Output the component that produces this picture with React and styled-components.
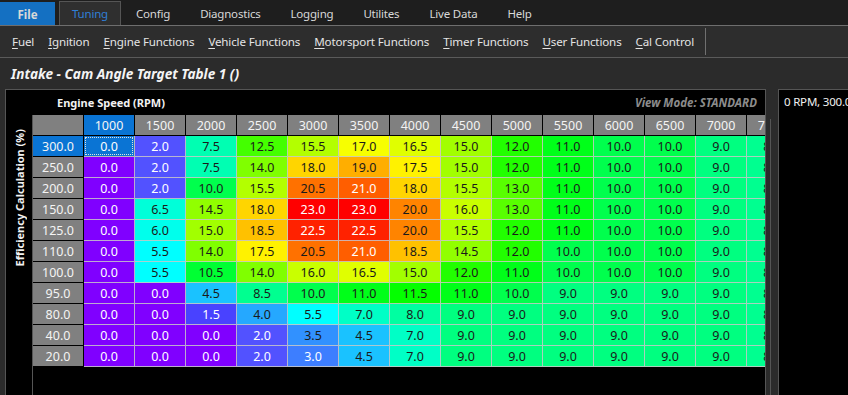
import React from 'react';
import styled, { createGlobalStyle } from 'styled-components';

const GlobalStyle = createGlobalStyle`
  html, body {
    margin: 0;
    padding: 0;
    background: #2b2b2b;
    overflow: hidden;
  }
  body {
    font-family: "Noto Sans", "Open Sans", sans-serif;
    color: #e6e6e6;
  }
`;

const Page = styled.div`
  display: flex;
  flex-direction: column;
  width: 848px;
  height: 395px;
  overflow: hidden;
  background: #2b2b2b;
`;

const MenuBar = styled.div`
  display: flex;
  align-items: flex-end;
  height: 25px;
  background: #1e1e1e;
  border-bottom: 1px solid #6e6e6e;
`;

const MenuTab = styled.div`
  display: flex;
  align-items: center;
  justify-content: center;
  height: 23px;
  padding: 0 ${props => props.pad || 14}px;
  font-size: 11.5px;
  letter-spacing: -0.2px;
  color: ${props => (props.active ? '#2f7fd6' : '#d8d8d8')};
  font-weight: ${props => (props.primary ? 700 : 400)};
  background: ${props => (props.primary ? '#1470c2' : props.active ? '#2f2f2f' : 'transparent')};
  border: 1px solid ${props => (props.active ? '#555' : 'transparent')};
  border-bottom: none;
  margin-right: ${props => (props.primary ? 4 : 0)}px;
  ${props => (props.primary ? 'width: 55px; padding: 0; box-sizing: border-box; letter-spacing: 0;' : '')}
`;

const Toolbar = styled.div`
  display: flex;
  align-items: center;
  height: 31px;
  padding-left: 5px;
  background: #2d2d2d;
  border-bottom: 1px solid #5a5a5a;
`;

const ToolItem = styled.div`
  padding: 0 7px;
  font-size: 11.6px;
  letter-spacing: -0.15px;
  color: #e4e4e4;
  white-space: nowrap;

  u {
    text-decoration-thickness: 1px;
    text-underline-offset: 2px;
  }
`;

const ToolSeparator = styled.div`
  width: 1px;
  height: 27px;
  margin-left: 4px;
  background: #707070;
`;

const TitleBar = styled.div`
  display: flex;
  align-items: center;
  height: 31px;
  padding-left: 11px;
  font-size: 13.6px;
  font-weight: 700;
  font-style: italic;
  color: #f4f4f4;
`;

const Workspace = styled.div`
  flex: 1;
  display: flex;
  min-height: 0;
  padding-left: 5px;
`;

const TablePanel = styled.div`
  display: flex;
  flex-direction: column;
  width: 759px;
  background: #000;
  border-top: 1px solid #555;
  border-left: 1px solid #555;
  border-right: 1px solid #555;
`;

const Splitter = styled.div`
  width: 12px;
  display: flex;
  justify-content: flex-start;
  padding-left: 4px;
  box-sizing: border-box;

  &::before {
    content: '';
    width: 1px;
    margin-top: 30px;
    background: #555;
  }
`;

const SidePanel = styled.div`
  flex: 1;
  background: #000;
  border-top: 1px solid #555;
  border-left: 1px solid #555;
  padding: 4px 0 0 5px;
  font-size: 11.5px;
  letter-spacing: -0.2px;
  color: #f0f0f0;
  white-space: nowrap;
  overflow: hidden;
`;

const PanelHeader = styled.div`
  display: flex;
  align-items: center;
  justify-content: space-between;
  height: 25px;
  padding: 0 8px 0 51px;
`;

const AxisTitle = styled.div`
  font-size: 11px;
  font-weight: 700;
  color: #f2f2f2;
`;

const ViewMode = styled.div`
  font-size: 11.5px;
  font-weight: 700;
  font-style: italic;
  color: #8c8c8c;
`;

const PanelBody = styled.div`
  flex: 1;
  display: flex;
  min-height: 0;
`;

const SideAxis = styled.div`
  width: 26px;
  display: flex;
  justify-content: center;
  padding-top: 14px;
  box-sizing: border-box;
`;

const SideAxisLabel = styled.div`
  writing-mode: vertical-rl;
  transform: rotate(180deg);
  font-size: 11px;
  font-weight: 700;
  color: #f2f2f2;
  white-space: nowrap;
  height: max-content;
`;

const Viewport = styled.div`
  flex: 1;
  overflow: hidden;
  border-left: 1px solid #555;
`;

const Grid = styled.div`
  display: grid;
  grid-template-columns: repeat(${props => props.cols}, 51px);
  grid-auto-rows: 21px;
  width: max-content;
  font-size: 12.5px;
`;

const Cell = styled.div`
  display: flex;
  align-items: center;
  justify-content: center;
  box-sizing: border-box;
  border-right: 1px solid ${props => props.line};
  border-bottom: 1px solid ${props => props.line};
  background: ${props => props.bg};
  color: ${props => props.fg};
  white-space: nowrap;
  overflow: hidden;
`;

const SelectedMark = styled.span`
  display: flex;
  align-items: center;
  justify-content: center;
  width: calc(100% - 2px);
  height: calc(100% - 2px);
  outline: 1px dotted #e0e0e0;
  outline-offset: -1px;
`;

const menu = ['Config', 'Diagnostics', 'Logging', 'Utilites', 'Live Data', 'Help'];
const tools = [
  ['F', 'uel'],
  ['I', 'gnition'],
  ['E', 'ngine Functions'],
  ['V', 'ehicle Functions'],
  ['M', 'otorsport Functions'],
  ['T', 'imer Functions'],
  ['U', 'ser Functions'],
  ['C', 'al Control'],
];

const rpm = ['1000', '1500', '2000', '2500', '3000', '3500', '4000', '4500', '5000', '5500', '6000', '6500', '7000', '7500'];

const rows = [
  ['300.0', [0, 2, 7.5, 12.5, 15.5, 17, 16.5, 15, 12, 11, 10, 10, 9, 8.5]],
  ['250.0', [0, 2, 7.5, 14, 18, 19, 17.5, 15, 12, 11, 10, 10, 9, 8.5]],
  ['200.0', [0, 2, 10, 15.5, 20.5, 21, 18, 15.5, 13, 11, 10, 10, 9, 8.5]],
  ['150.0', [0, 6.5, 14.5, 18, 23, 23, 20, 16, 13, 11, 10, 10, 9, 8.5]],
  ['125.0', [0, 6, 15, 18.5, 22.5, 22.5, 20, 15.5, 12, 11, 10, 10, 9, 8.5]],
  ['110.0', [0, 5.5, 14, 17.5, 20.5, 21, 18.5, 14.5, 12, 10, 10, 10, 9, 8.5]],
  ['100.0', [0, 5.5, 10.5, 14, 16, 16.5, 15, 12, 11, 10, 10, 10, 9, 8.5]],
  ['95.0', [0, 0, 4.5, 8.5, 10, 11, 11.5, 11, 10, 9, 9, 9, 9, 8.5]],
  ['80.0', [0, 0, 1.5, 4, 5.5, 7, 8, 9, 9, 9, 9, 9, 9, 8.5]],
  ['40.0', [0, 0, 0, 2, 3.5, 4.5, 7, 9, 9, 9, 9, 9, 9, 8.5]],
  ['20.0', [0, 0, 0, 2, 3, 4.5, 7, 9, 9, 9, 9, 9, 9, 8.5]],
];

// value -> [hue, lightness] stops, read off the table's colour map
const stops = [
  [0, 270, 50], [1.5, 242, 63], [2, 240, 66], [3, 220, 62], [4.5, 196, 55],
  [5.5, 180, 50], [7.5, 162, 50], [9, 150, 50], [10, 138, 50], [11, 126, 50],
  [12, 112, 50], [12.5, 104, 50], [14, 90, 50], [15.5, 78, 50], [17, 62, 50],
  [17.5, 57, 50], [18, 50, 50], [19, 41, 50], [20, 31, 50], [21, 22, 50],
  [22.5, 8, 50], [23, 0, 50],
];

function cellColour(v) {
  for (let i = 1; i < stops.length; i++) {
    const [v1, h1, l1] = stops[i];
    const [v0, h0, l0] = stops[i - 1];
    if (v <= v1) {
      const t = (v - v0) / (v1 - v0);
      return `hsl(${h0 + (h1 - h0) * t}, 100%, ${l0 + (l1 - l0) * t}%)`;
    }
  }
  return 'hsl(0, 100%, 50%)';
}

const textColour = v => (v <= 3 || v >= 21 ? '#ffffff' : '#1a1a1a');

export default function App() {
  return (
    <Page>
      <GlobalStyle />
      <MenuBar>
        <MenuTab primary>File</MenuTab>
        <MenuTab active pad={12}>Tuning</MenuTab>
        {menu.map(item => (
          <MenuTab key={item}>{item}</MenuTab>
        ))}
      </MenuBar>
      <Toolbar>
        {tools.map(([first, rest]) => (
          <ToolItem key={first + rest}>
            <u>{first}</u>
            {rest}
          </ToolItem>
        ))}
        <ToolSeparator />
      </Toolbar>
      <TitleBar>Intake - Cam Angle Target Table 1 ()</TitleBar>
      <Workspace>
        <TablePanel>
          <PanelHeader>
            <AxisTitle>Engine Speed (RPM)</AxisTitle>
            <ViewMode>View Mode: STANDARD</ViewMode>
          </PanelHeader>
          <PanelBody>
            <SideAxis>
              <SideAxisLabel>Efficiency Calculation (%)</SideAxisLabel>
            </SideAxis>
            <Viewport>
              <Grid cols={rpm.length + 1}>
                <Cell bg="#808080" fg="#fff" line="#000" />
                {rpm.map((r, i) => (
                  <Cell key={r} bg={i === 0 ? '#0a74d4' : '#808080'} fg="#f4f4f4" line="#000">
                    {r}
                  </Cell>
                ))}
                {rows.map(([load, values], ri) => (
                  <React.Fragment key={load}>
                    <Cell bg={ri === 0 ? '#0a74d4' : '#808080'} fg="#f4f4f4" line="#000">
                      {load}
                    </Cell>
                    {values.map((v, ci) =>
                      ri === 0 && ci === 0 ? (
                        <Cell key={ci} bg="#0a74d4" fg="#fff" line="#b8b8b8">
                          <SelectedMark>{v.toFixed(1)}</SelectedMark>
                        </Cell>
                      ) : (
                        <Cell key={ci} bg={cellColour(v)} fg={textColour(v)} line="rgba(200,200,200,0.85)">
                          {v.toFixed(1)}
                        </Cell>
                      )
                    )}
                  </React.Fragment>
                ))}
              </Grid>
            </Viewport>
          </PanelBody>
        </TablePanel>
        <Splitter />
        <SidePanel>0 RPM, 300.0</SidePanel>
      </Workspace>
    </Page>
  );
}
